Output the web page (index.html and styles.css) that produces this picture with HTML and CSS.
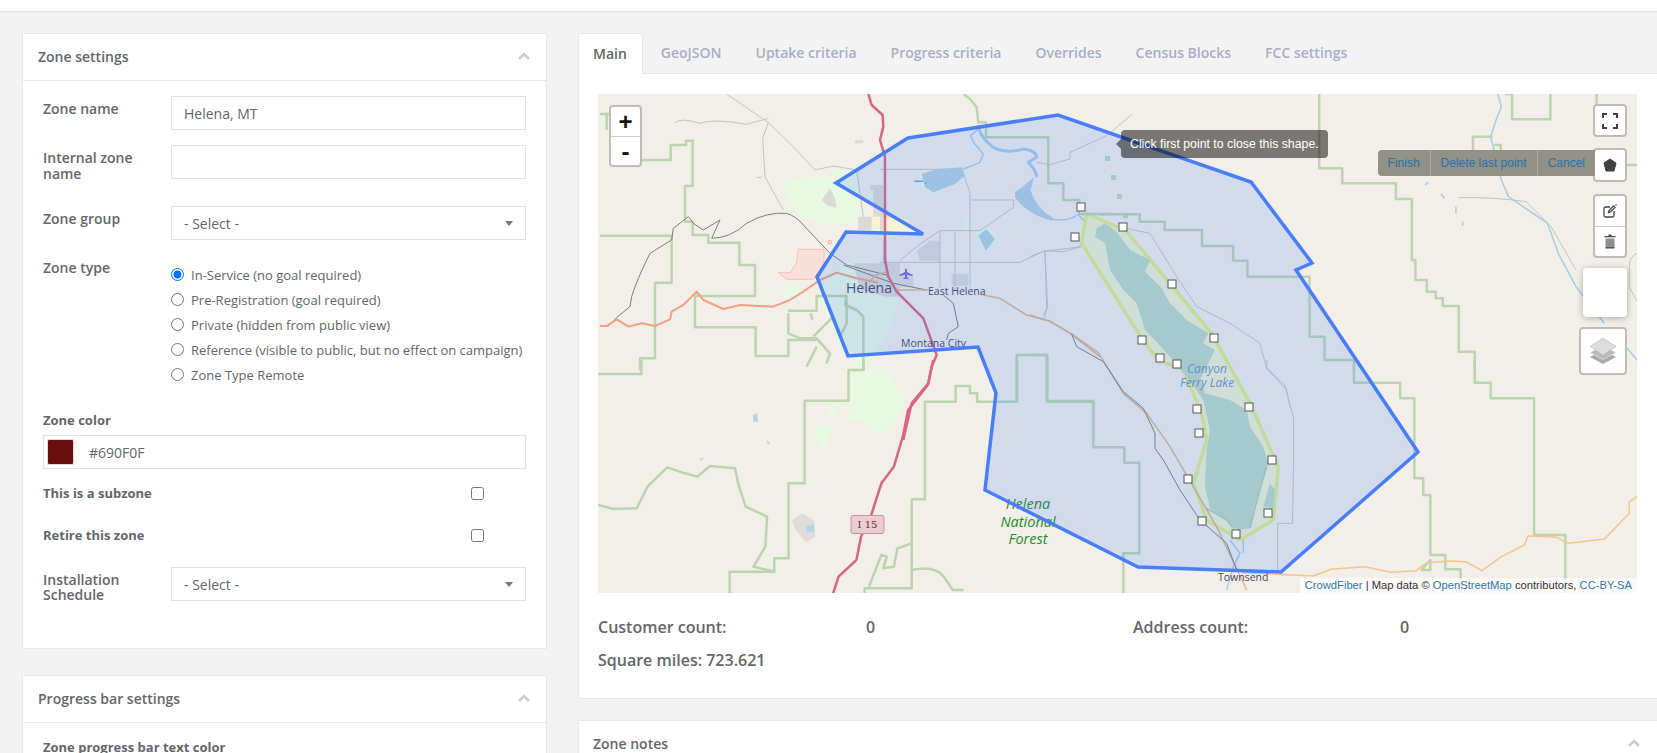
FILE: index.html
```html
<!DOCTYPE html>
<html lang="en">
<head>
    <meta charset="UTF-8">
    <title>Helena, MT - Zone</title>
    <link rel="stylesheet" href="styles.css">
</head>
<body>
    <div class="topbar"></div>
    <div class="page">
        <div class="left-col">
            <section class="panel">
                <header class="panel-head">
                    <h2>Zone settings</h2>
                    <svg class="chevron" viewBox="0 0 12 8"><path d="M1 7 6 2l5 5"/></svg>
                </header>
                <div class="panel-body settings-body">
                    <div class="form-row">
                        <label class="form-label">Zone name</label>
                        <input class="text-input" type="text" value="Helena, MT">
                    </div>
                    <div class="form-row">
                        <label class="form-label">Internal zone name</label>
                        <input class="text-input" type="text">
                    </div>
                    <div class="form-row">
                        <label class="form-label">Zone group</label>
                        <div class="select-wrap">
                            <select class="text-input"><option>- Select -</option></select>
                        </div>
                    </div>
                    <div class="form-row">
                        <label class="form-label">Zone type</label>
                        <div class="radio-list">
                            <label class="radio-item"><input type="radio" name="zonetype" checked> In-Service (no goal required)</label>
                            <label class="radio-item"><input type="radio" name="zonetype"> Pre-Registration (goal required)</label>
                            <label class="radio-item"><input type="radio" name="zonetype"> Private (hidden from public view)</label>
                            <label class="radio-item"><input type="radio" name="zonetype"> Reference (visible to public, but no effect on campaign)</label>
                            <label class="radio-item"><input type="radio" name="zonetype"> Zone Type Remote</label>
                        </div>
                    </div>
                    <div class="small-label">Zone color</div>
                    <div class="color-input">
                        <span class="swatch"></span>
                        <span>#690F0F</span>
                    </div>
                    <label class="check-row first"><span>This is a subzone</span><input type="checkbox"></label>
                    <label class="check-row"><span>Retire this zone</span><input type="checkbox"></label>
                    <div class="form-row tight">
                        <label class="form-label">Installation Schedule</label>
                        <div class="select-wrap">
                            <select class="text-input"><option>- Select -</option></select>
                        </div>
                    </div>
                </div>
            </section>

            <section class="panel">
                <header class="panel-head">
                    <h2>Progress bar settings</h2>
                    <svg class="chevron" viewBox="0 0 12 8"><path d="M1 7 6 2l5 5"/></svg>
                </header>
                <div class="panel-body progress-body">
                    <div class="small-label">Zone progress bar text color</div>
                </div>
            </section>
        </div>

        <div class="right-col">
            <nav class="tabs">
                <a class="tab active">Main</a>
                <a class="tab">GeoJSON</a>
                <a class="tab">Uptake criteria</a>
                <a class="tab">Progress criteria</a>
                <a class="tab">Overrides</a>
                <a class="tab">Census Blocks</a>
                <a class="tab">FCC settings</a>
            </nav>
            <section class="tab-body">
                <div class="map">
                    <svg class="map-art" viewBox="598 94 1039 499" width="1039" height="499">
                        <defs>
                            <pattern id="hatch" width="8" height="8" patternUnits="userSpaceOnUse" patternTransform="rotate(-45)">
                                <rect width="8" height="8" fill="#fbe3dc"/>
                                <path d="M0 0H8" stroke="#f2c2b4" stroke-width="1"/>
                            </pattern>
                            <rect id="vertex" x="-4" y="-4" width="8" height="8" fill="#fff" stroke="#555" stroke-width="1"/>
                        </defs>
                        <rect x="598" y="94" width="1039" height="499" fill="#f2efe9"/>

                        <!-- land cover -->
                        <g transform="translate(600 90) scale(.3333)">
                            <path class="wood" d="M555 265H620V260H700V240H770L780 400H650V385H600L560 320Z"/>
                            <path class="wood" d="M560 590 590 580 600 620 550 625Z"/>
                            <path class="wood" d="M650 600 740 520 800 500 900 600 880 700 790 840 720 780Z"/>
                            <path class="urban" d="M665 330 690 295 705 325 710 355 680 345Z"/>
                            <path fill="#f6f4d2" d="M780 380H860V420H780Z"/>
                            <path class="urban" d="M775 380H815V420H775ZM810 285H850V300H810ZM820 300H850V380H820ZM765 150H790V160H765Z"/>
                            <path class="urban" d="M760 520H900V620H860L780 600Z"/>
                            <path d="M535 548H570L590 520 595 478H672V520L640 568H560Z" fill="url(#hatch)" stroke="#f2c2b4"/>
                            <rect x="685" y="452" width="9" height="9" fill="#fbe3dc" stroke="#f2b8a8" stroke-width="1"/>
                        </g>
                        <g transform="translate(560 360) scale(.3571 .3333)">
                            <path class="wood" d="M810 30H915L970 120 925 200 890 220 840 180H810Z"/>
                            <path class="wood" d="M710 200 760 190 745 280 710 230ZM750 130H790L770 165H750Z"/>
                            <path d="M650 480 680 460 710 480 715 530 690 548 660 510Z" fill="#dedddb"/>
                            <path d="M690 500 712 490 712 515 690 515Z" fill="#b5d5e5"/>
                            <path d="M540 165 552 160 555 185 542 185ZM578 240 588 250 582 255ZM390 295H402L396 303Z" fill="#b5d5e5"/>
                        </g>
                        <g transform="translate(880 94) scale(.3333)">
                            <path class="urban" d="M110 470 150 440 180 440V500L120 500ZM0 360H40V410H0ZM0 540H100V580H30ZM215 540H265V575H215Z"/>
                            <path fill="#f6f4d2" d="M10 370H80L120 420H10Z"/>
                            <path class="wood" d="M250 365H270V410H250ZM290 415 320 400 350 430 320 470 295 445Z"/>
                            <path class="wood" d="M115 240 240 215 260 250 160 300 130 285Z"/>
                            <path d="M675 186h15v15h-15zM693 243h15v15h-15zM711 300h15v15h-15zM729 358h15v15h-15z" fill="#b9dcae"/>
                        </g>

                        <!-- tracks and minor roads -->
                        <g class="minor" transform="translate(600 90) scale(.3333)">
                            <path d="M380 12 505 98 488 145 495 260 550 360"/>
                            <path d="M225 98Q245 82 300 100 340 85 440 103L505 85"/>
                            <path d="M505 98 580 170 645 240 700 228 770 240 790 380"/>
                            <path d="M470 262H485"/>
                        </g>
                        <g class="minor" transform="translate(880 94) scale(.3333)">
                            <path d="M0 226H245L270 295V580"/>
                            <path d="M272 318H402L400 340 300 410H180V580"/>
                            <path d="M0 505H420L490 472 590 460 610 450"/>
                            <path d="M495 472 503 640 490 680"/>
                            <path d="M225 415V590M180 410 120 450 60 500"/>
                            <path d="M470 205 510 212 570 195V175L680 125 755 62"/>
                        </g>
                        <g class="minor" transform="translate(1030 200) scale(.3333)">
                            <path d="M0 170 45 153 100 155 155 140M45 153 50 325 40 345"/>
                            <path d="M205 65 310 90 360 100 440 230 500 320 600 370 690 430 710 505 770 570 780 620"/>
                        </g>
                        <g class="minor" transform="translate(1100 360) scale(.3552 .3333)">
                            <path d="M470 0V25L520 75 545 175V300L542 490H500V630"/>
                        </g>
                        <g class="minor" transform="translate(1100 20) scale(.3552 .3333)">
                            <path d="M1010 533Q1100 530 1200 545L1270 620 1340 750"/>
                            <path d="M1512 700Q1490 710 1490 740V800L1512 845"/>
                        </g>

                        <!-- water -->
                        <g transform="translate(880 94) scale(.3333)">
                            <path class="water-fill" d="M125 240 170 225 245 220 255 245 225 270 160 295 135 280Z"/>
                            <path class="water-fill" d="M405 295Q440 270 462 248L452 290Q470 345 520 372L515 380Q440 360 405 310Z"/>
                            <path class="water-fill" d="M295 425 318 405 345 435 318 470Z"/>
                            <path class="water" d="M250 225 300 205 310 180 280 145 272 125 295 105"/>
                            <path class="water wide" d="M295 95Q300 130 340 160 380 180 430 165 470 170 470 190L445 205Q470 230 470 250"/>
                            <path class="water" d="M515 375Q560 385 595 362L640 410"/>
                            <path class="water" d="M103 262H130M135 268H140" style="stroke:#69a7e8"/>
                        </g>
                        <g transform="translate(1100 20) scale(.3552 .3333)">
                            <path class="water" d="M1120 222 1130 260 1115 300 1100 350 1130 480 1150 530 1260 610 1290 700 1340 800 1420 910"/>
                            <path class="water" d="M1480 980 1512 1020M925 487 915 495M960 522 970 535M1002 560V580M1022 605 1020 618"/>
                        </g>
                        <g transform="translate(1030 200) scale(.3333)">
                            <path class="water" d="M600 1020 630 1060 610 1100 590 1170M640 1020V1060"/>
                        </g>

                        <!-- Canyon Ferry Lake -->
                        <g transform="translate(1030 200) scale(.3333)">
                            <path class="shore" d="M170 40 155 130 335 415 385 480 460 510 515 640 530 720 490 850 530 960 630 1020 730 960 745 800 660 610 545 400 290 95 215 60Z"/>
                            <path class="lake" d="M200 85 225 70 260 95 300 150 360 180 345 215 395 265 420 310 470 360 535 400 520 430 555 450 540 480 510 540 525 580 600 600 650 630 660 680 700 740 715 790 700 830 670 930 660 985 620 990 590 960 540 925 525 860 530 750 540 690 520 600 470 530 420 470 375 420 345 390 320 310 280 270 240 210 225 130 195 110Z"/>
                            <path class="lake" d="M700 920 720 850 735 870 730 925Z"/>
                            <path class="reef" d="M710 800Q680 900 660 985M530 925 590 960 610 985"/>
                        </g>

                        <!-- boundaries -->
                        <g class="boundary" transform="translate(600 90) scale(.3333)">
                            <path d="M0 72H30M120 210H212V165H258V152H278V288H255V395H278V435H325V458H418V525H465V618H285V712H467V798H565V750H650"/>
                            <path d="M0 437H215V578H165V805H120V840"/>
                            <path d="M20 72V120"/>
                            <path d="M565 662H650V618H740L735 645 770 660 790 680"/>
                            <path d="M565 670V730L600 745H650L690 790 680 820M650 770 620 830M700 680 660 720 640 740M740 630V700L720 740"/>
                            <path d="M632 670 638 690M790 680V840"/>
                        </g>
                        <g class="boundary" transform="translate(560 360) scale(.3571 .3333)">
                            <path d="M228 0V42H106"/>
                            <path d="M850 0V30H808V122H685V370H640V595H600V635H475V700"/>
                            <path d="M106 435 150 447 215 445 245 380 300 322 350 340 385 350 420 318 490 325 500 375 520 440 580 470 575 560 542 620 600 635"/>
                            <path d="M853 700V685H985V418H1022V125H1108V78H1148V100H1168V125H1280V0"/>
                            <path d="M865 680 900 585 915 590 905 625 935 620 945 565 985 550"/>
                            <path d="M985 630Q1050 615 1075 650L1100 690H1130"/>
                        </g>
                        <g class="boundary" transform="translate(800 240) scale(.3333)">
                            <path d="M650 485V345H742V485H880V600"/>
                        </g>
                        <g class="boundary" transform="translate(1030 200) scale(.3333)">
                            <path d="M0 465H50V603H190V742H283V788H328V1060H280V1179"/>
                        </g>
                        <g class="boundary" transform="translate(880 94) scale(.3333)">
                            <path d="M250 0 270 15 290 40 295 85H318V130H505V268H550V318H597V360H700"/>
                        </g>
                        <g class="boundary" transform="translate(1100 20) scale(.3552 .3333)">
                            <path d="M0 583H112V605H182V630H287V678H375V722H415V770H590V950H632V1020H715V1050"/>
                            <path d="M617 222V445H682V490H833V537H878V720H888V780H920V815H945V835H965V858H1010V995H1055V1050"/>
                            <path d="M1140 222H1160V298H1268V222M1050 390V350H1105M1110 375H1128V390M1398 222V300M1480 435H1512"/>
                        </g>
                        <g class="boundary" transform="translate(1100 360) scale(.3552 .3333)">
                            <path d="M715 0V68H845V115H885V355H910V405H930V585H972V628H1015V700"/>
                            <path d="M1055 0V68H1100V115H1222V525H1310V700M905 630 930 600V630Z"/>
                        </g>

                        <!-- roads -->
                        <g transform="translate(600 90) scale(.3333)">
                            <path class="rail" d="M0 708H25Q50 680 90 650L95 620Q110 570 150 490L215 450 220 415 265 380 280 400 310 420 360 390 335 445Q390 445 440 400 500 365 560 370 590 380 610 405L690 490 740 525 860 555"/>
                            <path class="trunk" d="M0 708H20L50 688 85 710 125 700 165 708 210 688 215 665 250 645 290 605 310 630 370 657 420 645 520 650 570 630 610 605 660 570 710 548 770 565 835 578"/>
                            <path class="motorway" d="M805 12 815 45 848 75 850 110 840 150 855 200V520"/>
                        </g>
                        <g transform="translate(800 240) scale(.3333)">
                            <path class="rail" d="M130 75 280 130 380 150"/>
                            <path class="primary" d="M210 125Q225 98 265 97M285 150H385"/>
                            <path class="primary" d="M550 165 600 175 680 225 750 243 810 280 900 350"/>
                            <path class="rail" d="M430 165 460 190 475 260 445 280 440 300"/>
                            <path class="motorway" d="M255 0V60L265 110 290 155 370 235 390 290 410 345 395 380 385 430 335 490 310 600"/>
                        </g>
                        <g transform="translate(560 360) scale(.3571 .3333)">
                            <path class="motorway" d="M1045 0 1030 75 975 150 960 230 935 320 900 370 870 470 843 530 830 600 780 650 765 700"/>
                        </g>
                        <g transform="translate(1030 200) scale(.3333)">
                            <path class="primary" d="M0 345 60 365 125 402 205 458 280 580 350 640 420 740 560 980 650 1170"/>
                            <path class="rail" d="M125 402 140 440 220 485 280 575 340 625 375 700V745L400 780 450 870 510 960 590 1030 620 1110"/>
                        </g>
                        <g transform="translate(1100 360) scale(.3552 .3333)">
                            <path class="secondary" d="M400 638 600 648 650 628 745 620 820 637 890 632 920 608 985 603 1030 605 1075 632 1130 590 1195 555 1205 528 1285 532 1320 550 1420 537 1490 460 1490 425 1512 410"/>
                        </g>

                        <!-- map labels -->
                        <text class="lbl-water" x="1207" y="373" text-anchor="middle">Canyon</text>
                        <text class="lbl-water" x="1207" y="387" text-anchor="middle">Ferry Lake</text>
                        <text class="lbl-forest" x="1028" y="509" text-anchor="middle">Helena</text>
                        <text class="lbl-forest" x="1028" y="527" text-anchor="middle">National</text>
                        <text class="lbl-forest" x="1028" y="544" text-anchor="middle">Forest</text>
                        <text class="lbl-city" x="846" y="293">Helena</text>
                        <text class="lbl-town" x="928" y="295">East Helena</text>
                        <text class="lbl-town" x="901" y="347">Montana City</text>
                        <text class="lbl-town" x="1218" y="581">Townsend</text>
                        <path d="M906 268.500c.7 0 1 .8 1 2v1.500l5.500 2.800v1.200l-5.500-1.300v2.600l1.600 1.200v.8l-2.600-.6-2.600.6v-.8l1.600-1.200v-2.600l-5.500 1.300v-1.200l5.500-2.800v-1.500c0-1.200.3-2 1-2z" fill="#7466d6"/>
                        <rect x="851" y="515.500" width="33" height="18" rx="2" fill="#e9cdd0" stroke="#cf8f9c"/>
                        <text class="lbl-shield" x="867.500" y="528" text-anchor="middle">I 15</text>

                        <!-- drawn zone -->
                        <polygon class="zone" points="908,138 1058,115 1251,182 1312,263 1296,270 1418,452 1281,572 1138,567 985,490 996,393 978,347 848,356 817,277 846,232 923,234 836,183"/>
                        <use href="#vertex" x="1081" y="207"/>
                        <use href="#vertex" x="1075" y="237"/>
                        <use href="#vertex" x="1123" y="227"/>
                        <use href="#vertex" x="1172" y="284"/>
                        <use href="#vertex" x="1214" y="338"/>
                        <use href="#vertex" x="1142" y="340"/>
                        <use href="#vertex" x="1160" y="358"/>
                        <use href="#vertex" x="1177" y="364"/>
                        <use href="#vertex" x="1197" y="409"/>
                        <use href="#vertex" x="1249" y="407"/>
                        <use href="#vertex" x="1199" y="433"/>
                        <use href="#vertex" x="1272" y="460"/>
                        <use href="#vertex" x="1188" y="479"/>
                        <use href="#vertex" x="1268" y="513"/>
                        <use href="#vertex" x="1202" y="521"/>
                        <use href="#vertex" x="1236" y="534"/>
                    </svg>

                    <div class="zoom-ctrl">
                        <a class="zoom-btn">+</a>
                        <a class="zoom-btn">-</a>
                    </div>

                    <div class="draw-tooltip">Click first point to close this shape.</div>

                    <div class="map-ctrls">
                        <div class="ctrl-box">
                            <a class="ctrl-btn">
                                <svg width="16" height="16" viewBox="0 0 16 16"><path class="ico-line" d="M1 5V1h4M11 1h4v4M15 11v4h-4M5 15H1v-4"/></svg>
                            </a>
                        </div>
                        <div class="ctrl-box draw-row">
                            <div class="draw-actions">
                                <a>Finish</a>
                                <a>Delete last point</a>
                                <a>Cancel</a>
                            </div>
                            <a class="ctrl-btn">
                                <svg width="14" height="14" viewBox="0 0 14 14"><path d="M7 1 13 5 11 13H3L1 5Z" fill="#3f3f3f" stroke="#3f3f3f" stroke-linejoin="round"/></svg>
                            </a>
                        </div>
                        <div class="ctrl-box stack">
                            <a class="ctrl-btn">
                                <svg width="14" height="14" viewBox="0 0 14 14"><path class="ico-thin" d="M7 3H2.500A1.500 1.500 0 0 0 1 4.500v7A1.500 1.500 0 0 0 2.500 13h7a1.500 1.500 0 0 0 1.500-1.500V7"/><path class="ico-thin" d="M5.500 8.500 6 6.500 10.500 2 12 3.500 7.500 8Z"/><circle cx="13" cy="1" r=".8" fill="#444"/></svg>
                            </a>
                            <a class="ctrl-btn">
                                <svg width="12" height="15" viewBox="0 0 12 15"><path d="M4.500 .5h3v1.500h4v1.300H.5V2h4z" fill="#444"/><path d="M1.500 4.500h9V13a1.500 1.500 0 0 1-1.500 1.500H3A1.500 1.500 0 0 1 1.500 13z" fill="#8f8f8f"/><path d="M1.500 13.800h9" stroke="#444"/></svg>
                            </a>
                        </div>
                        <div class="blank-card"></div>
                        <div class="ctrl-box layers">
                            <svg width="28" height="28" viewBox="0 0 28 28">
                                <path d="M14 13 27 20 14 27 1 20Z" fill="#a9a9a9"/>
                                <path d="M14 8.500 27 15.500 14 22.500 1 15.500Z" fill="#b9b9b9" stroke="#f2f2f2" stroke-width=".6"/>
                                <path d="M14 1 27 9.500 14 18 1 9.500Z" fill="#dcdcdc" stroke="#bbb" stroke-width=".6"/>
                            </svg>
                        </div>
                    </div>

                    <div class="attribution"><a>CrowdFiber</a> | Map data © <a>OpenStreetMap</a> contributors, <a>CC-BY-SA</a></div>
                </div>

                <div class="stats">
                    <span>Customer count:</span>
                    <span>0</span>
                    <span>Address count:</span>
                    <span>0</span>
                </div>
                <div class="stats-line">Square miles: 723.621</div>
            </section>

            <section class="panel notes-panel">
                <header class="panel-head">
                    <h2>Zone notes</h2>
                    <svg class="chevron" viewBox="0 0 12 8"><path d="M1 7 6 2l5 5"/></svg>
                </header>
            </section>
        </div>
    </div>
</body>
</html>
```

FILE: styles.css
```css
* {
    margin: 0;
    padding: 0;
    box-sizing: border-box;
}

html, body {
    height: 100%;
    overflow: hidden;
}

body {
    font-family: 'Open Sans', 'Noto Sans', sans-serif;
    font-size: 13px;
    background: #f3f3f3;
    color: #63666b;
}

.topbar {
    height: 12px;
    background: #fff;
    border-bottom: 1px solid #e6e6e6;
}

.page {
    display: grid;
    grid-template-columns: 525px 1fr;
    column-gap: 31px;
    padding: 21px 0 0 22px;
}

/* panels */
.panel {
    background: #fff;
    border: 1px solid #e8e8e8;
    margin-bottom: 26px;
}

.panel-head {
    display: flex;
    align-items: center;
    justify-content: space-between;
    height: 47px;
    padding: 0 15px 2px;
    border-bottom: 1px solid #e8e8e8;
}

.panel-head h2 {
    font-size: 14px;
    font-weight: 600;
}

.chevron {
    width: 12px;
    height: 8px;
    margin-right: 1px;
}

.chevron path {
    fill: none;
    stroke: #ccc;
    stroke-width: 2.500;
}

.panel-body {
    padding: 15px 20px 37px;
}

.progress-body {
    padding-top: 16px;
}

/* form */
.form-row {
    display: grid;
    grid-template-columns: 128px 355px;
    margin-bottom: 15px;
}

.form-row.tight {
    margin-top: 24px;
    margin-bottom: 0;
}

.form-label {
    font-size: 14px;
    font-weight: 600;
    line-height: 16px;
    padding: 5px 10px 9px 0;
}

.form-row.tight .form-label {
    line-height: 15px;
}

.text-input {
    display: block;
    width: 100%;
    height: 34px;
    padding: 0 12px;
    font-family: inherit;
    font-size: 14px;
    color: #63666b;
    background: #fff;
    border: 1px solid #e2e2e2;
    border-radius: 0;
    appearance: none;
    outline: none;
}

.select-wrap {
    position: relative;
}

.select-wrap::after {
    content: '';
    position: absolute;
    right: 13px;
    top: 15px;
    border-left: 4px solid transparent;
    border-right: 4px solid transparent;
    border-top: 5px solid #777;
}

.radio-list {
    padding-top: 7px;
}

.radio-item {
    display: flex;
    align-items: center;
    height: 25px;
    white-space: nowrap;
}

.radio-item input {
    width: 13px;
    height: 13px;
    margin-right: 7px;
}

.small-label {
    font-size: 13px;
    font-weight: 700;
    line-height: 16px;
}

.settings-body .small-label {
    margin-top: 25px;
    margin-bottom: 7px;
}

.color-input {
    display: flex;
    align-items: center;
    gap: 15px;
    height: 34px;
    padding-left: 3px;
    font-size: 14px;
    border: 1px solid #e2e2e2;
}

.swatch {
    width: 27px;
    height: 26px;
    background: #690f0f;
    border: 1px solid #ddd;
    border-radius: 2px;
}

.check-row {
    display: flex;
    align-items: center;
    height: 16px;
    margin-top: 26px;
    font-size: 13px;
    font-weight: 700;
}

.check-row.first {
    margin-top: 16px;
}

.check-row span {
    width: 428px;
}

.check-row input {
    width: 13px;
    height: 13px;
    margin-top: 1px;
}

/* tabs */
.tabs {
    display: flex;
    gap: 2px;
    height: 41px;
    border-bottom: 1px solid #e6e6e6;
}

.tab {
    padding: 0 16px;
    font-size: 14px;
    font-weight: 600;
    line-height: 40px;
    color: #a9aec4;
}

.tab.active {
    height: 41px;
    color: #5f6268;
    background: #fff;
    border: 1px solid #e8e8e8;
    border-bottom: none;
    border-radius: 3px 3px 0 0;
    padding: 0 15px 0 14px;
}

.tab-body {
    background: #fff;
    border: 1px solid #e8e8e8;
    border-top: none;
    border-right: none;
    padding: 20px 20px 27px 19px;
}

.notes-panel {
    margin-top: 21px;
    border-right: none;
}

.notes-panel .panel-head {
    padding-left: 14px;
    padding-right: 16px;
}

/* map */
.map {
    position: relative;
    height: 499px;
    overflow: hidden;
    background: #f2efe9;
}

.map-art {
    display: block;
}

.map-art g {
    fill: none;
    stroke-linejoin: round;
}

.map-art g * {
    vector-effect: non-scaling-stroke;
}

.map-art .wood { fill: #e8f9e2; }
.map-art .urban { fill: #dcdad6; }

.map-art .boundary path {
    stroke: #bcd4b0;
    stroke-width: 2.500;
}

.map-art .minor path {
    stroke: #c4c4c2;
    stroke-width: 1;
}

.map-art .water {
    stroke: #a6cde6;
    stroke-width: 1.500;
}

.map-art .water.wide {
    stroke-width: 3;
}

.map-art .water-fill {
    fill: #b3cfde;
}

.map-art .shore {
    fill: #eef3d0;
    stroke: #dfee88;
    stroke-width: 3.500;
}

.map-art .lake {
    fill: #bcd9c2;
}

.map-art .reef {
    stroke: #a9ccb5;
    stroke-width: 1.500;
}

.map-art .rail {
    stroke: #7d7d7d;
    stroke-width: 1;
}

.map-art .trunk {
    stroke: #f0a182;
    stroke-width: 2;
}

.map-art .motorway {
    stroke: #d8687f;
    stroke-width: 2.500;
}

.map-art .primary {
    stroke: #d9b68f;
    stroke-width: 1.500;
}

.map-art .secondary {
    stroke: #f3c68c;
    stroke-width: 1.500;
}

.zone {
    fill: rgba(51, 125, 255, .17);
    stroke: #4a7dfa;
    stroke-width: 3.500;
    stroke-linejoin: miter;
}

.lbl-city { font-size: 14px; fill: #454a5c; }
.lbl-town { font-size: 10.500px; fill: #43475a; }
.lbl-water { font-size: 12px; font-style: italic; fill: #6f93c4; }
.lbl-forest { font-size: 14.500px; font-style: italic; fill: #2a8a2c; }
.lbl-shield { font-family: 'DejaVu Serif', serif; font-size: 10px; fill: #7a2238; }

.zoom-ctrl {
    position: absolute;
    top: 11px;
    left: 11px;
    width: 33px;
    background: #fff;
    border: 2px solid #bdbdb8;
    border-radius: 4px;
}

.zoom-btn {
    display: block;
    height: 29px;
    font-family: 'Liberation Sans', sans-serif;
    font-size: 24px;
    font-weight: 700;
    line-height: 29px;
    text-align: center;
    color: #111;
}

.zoom-btn + .zoom-btn {
    border-top: 1px solid #ccc;
}

.draw-tooltip {
    position: absolute;
    top: 36px;
    left: 523px;
    height: 28px;
    padding: 0 9px;
    font-family: 'Liberation Sans', sans-serif;
    font-size: 12.300px;
    line-height: 28px;
    white-space: nowrap;
    color: #fff;
    background: rgba(0, 0, 0, .5);
    border-radius: 4px;
}

.draw-tooltip::before {
    content: '';
    position: absolute;
    left: -5px;
    top: 9px;
    border-top: 5px solid transparent;
    border-bottom: 5px solid transparent;
    border-right: 5px solid rgba(0, 0, 0, .5);
}

.map-ctrls {
    position: absolute;
    top: 10px;
    right: 10px;
    display: flex;
    flex-direction: column;
    align-items: flex-end;
    gap: 11px;
}

.ctrl-box {
    width: 34px;
    background: #fff;
    border: 2px solid #bdbdb8;
    border-radius: 4px;
}

.ctrl-btn {
    display: flex;
    align-items: center;
    justify-content: center;
    height: 29px;
}

.draw-row {
    position: relative;
}

.draw-row .ctrl-btn {
    height: 30px;
}

.stack {
    margin-top: 1px;
}

.stack .ctrl-btn {
    height: 30px;
}

.stack .ctrl-btn + .ctrl-btn {
    border-top: 1px solid #ccc;
}

.ico-line {
    fill: none;
    stroke: #3f3f3f;
    stroke-width: 2;
}

.ico-thin {
    fill: none;
    stroke: #444;
    stroke-width: 1.300;
}

.draw-actions {
    position: absolute;
    top: 0;
    right: 30px;
    display: flex;
    height: 26px;
    background: #919187;
    border-radius: 4px 0 0 4px;
    font-family: 'Liberation Sans', sans-serif;
    font-size: 12px;
    line-height: 26px;
    white-space: nowrap;
    color: #2b72a8;
}

.draw-actions a {
    padding: 0 10px;
}

.draw-actions a + a {
    border-left: 1px solid #adada5;
}

.blank-card {
    width: 44px;
    height: 49px;
    margin-top: -1px;
    background: #fff;
    border-radius: 4px;
    box-shadow: 0 1px 6px rgba(0, 0, 0, .3);
}

.layers {
    display: flex;
    align-items: center;
    justify-content: center;
    width: 48px;
    height: 48px;
    margin-top: -1px;
}

.attribution {
    position: absolute;
    right: 0;
    bottom: 0;
    height: 15px;
    padding: 0 5px;
    font-family: 'Liberation Sans', sans-serif;
    font-size: 11.200px;
    line-height: 15px;
    white-space: nowrap;
    color: #333;
    background: rgba(255, 255, 255, .7);
}

.attribution a {
    color: #2f78a8;
}

.stats {
    display: grid;
    grid-template-columns: 268px 267px 267px 1fr;
    margin-top: 23px;
    font-size: 16px;
    font-weight: 600;
    line-height: 22px;
}

.stats-line {
    margin-top: 11px;
    font-size: 16px;
    font-weight: 600;
    line-height: 22px;
}
```
